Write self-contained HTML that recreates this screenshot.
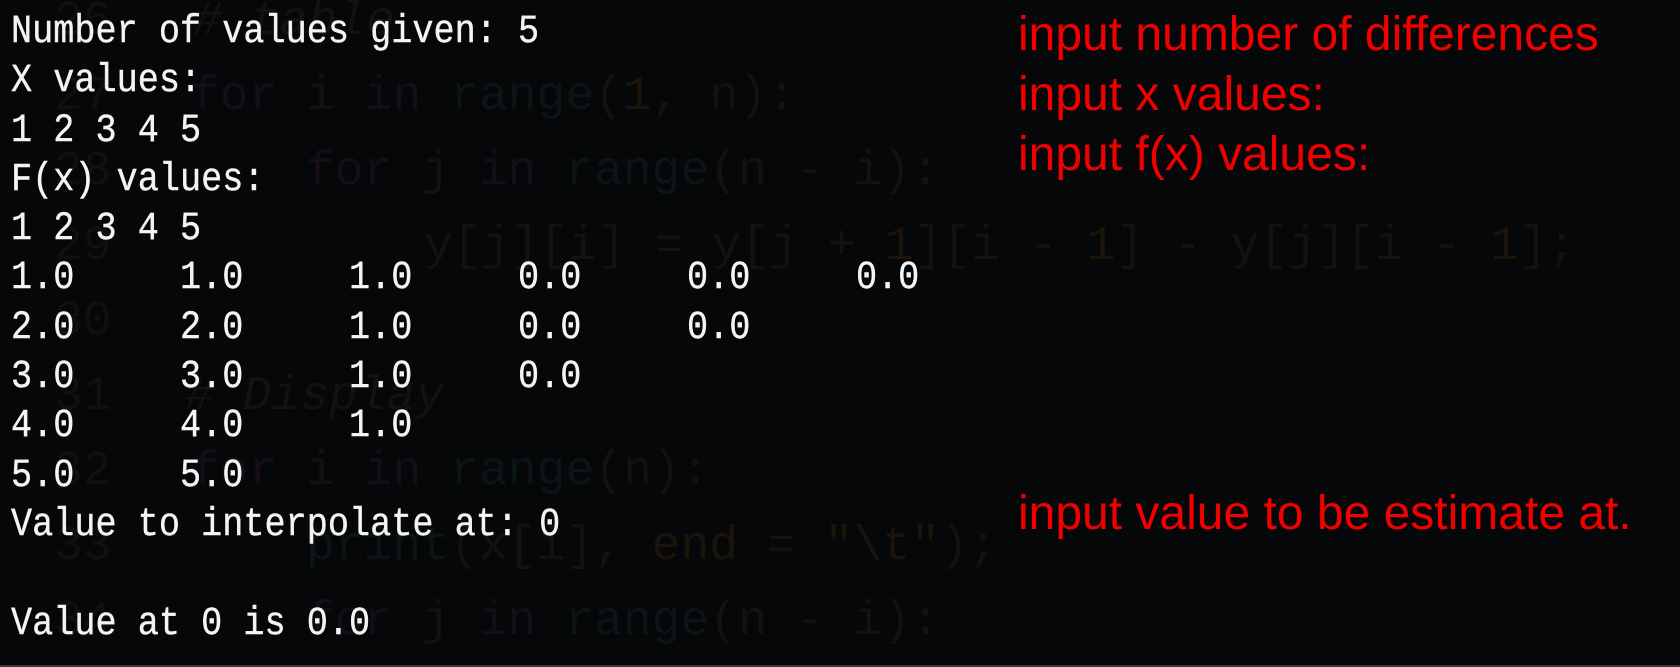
<!DOCTYPE html>
<html><head><meta charset="utf-8">
<style>
html,body{margin:0;padding:0;width:1680px;height:667px;overflow:hidden;}
body{background:#060709;position:relative;}
.c{position:absolute;font-family:"Liberation Mono",monospace;font-size:48px;line-height:1;white-space:pre;color:#111214;}
.k{color:#150d17;} .f{color:#0b1515;} .n{color:#1c130a;} .ln{color:#0f1012;}
.t{position:absolute;left:11px;font-family:"Liberation Mono",monospace;font-size:40px;line-height:1;color:#f4f4f4;white-space:pre;tab-size:8;transform:scaleX(0.88);transform-origin:0 0;-webkit-text-stroke:0.4px #f4f4f4;}
.r{position:absolute;left:1018px;font-family:"Liberation Sans",sans-serif;font-size:48px;line-height:1;color:#f20000;white-space:pre;}
.bot{position:absolute;left:0;top:665px;width:1680px;height:2px;background:#3a3a3c;}
</style></head><body>
<div class="c ln" style="left:54px;top:-2px">26</div><div class="c" style="left:193px;top:-2px;font-style:italic">#&nbsp;table</div>
<div class="c ln" style="left:54px;top:73px">27</div><div class="c" style="left:191px;top:73px"><span class="k">for</span> i <span class="k">in</span> <span class="f">range</span>(<span class="n">1</span>, n):</div>
<div class="c ln" style="left:54px;top:148px">28</div><div class="c" style="left:306px;top:148px"><span class="k">for</span> j <span class="k">in</span> <span class="f">range</span>(n - i):</div>
<div class="c ln" style="left:54px;top:223px">29</div><div class="c" style="left:424px;top:223px">y[j][i] = y[j + <span class="n">1</span>][i - <span class="n">1</span>] - y[j][i - <span class="n">1</span>];</div>
<div class="c ln" style="left:54px;top:298px">30</div>
<div class="c ln" style="left:54px;top:373px">31</div><div class="c" style="left:185px;top:373px;font-style:italic"># Display</div>
<div class="c ln" style="left:54px;top:448px">32</div><div class="c" style="left:191px;top:448px"><span class="k">for</span> i <span class="k">in</span> <span class="f">range</span>(n):</div>
<div class="c ln" style="left:54px;top:523px">33</div><div class="c" style="left:306px;top:523px"><span class="f">print</span>(x[i], <span class="n">end</span> = <span class="n">"\t"</span>);</div>
<div class="c ln" style="left:54px;top:598px">34</div><div class="c" style="left:306px;top:598px"><span class="k">for</span> j <span class="k">in</span> <span class="f">range</span>(n - i):</div>

<div class="t" style="top:13px">Number of values given: 5</div>
<div class="t" style="top:62px">X values:</div>
<div class="t" style="top:112px">1 2 3 4 5</div>
<div class="t" style="top:161px">F(x) values:</div>
<div class="t" style="top:210px">1 2 3 4 5</div>
<div class="t" style="top:259px">1.0	1.0	1.0	0.0	0.0	0.0</div>
<div class="t" style="top:309px">2.0	2.0	1.0	0.0	0.0</div>
<div class="t" style="top:358px">3.0	3.0	1.0	0.0</div>
<div class="t" style="top:407px">4.0	4.0	1.0</div>
<div class="t" style="top:457px">5.0	5.0</div>
<div class="t" style="top:506px">Value to interpolate at: 0</div>
<div class="t" style="top:605px">Value at 0 is 0.0</div>

<div class="r" style="top:11px">input number of differences</div>
<div class="r" style="top:71px">input x values:</div>
<div class="r" style="top:131px">input f(x) values:</div>
<div class="r" style="top:490px">input value to be estimate at.</div>
<div class="bot"></div>
</body></html>
